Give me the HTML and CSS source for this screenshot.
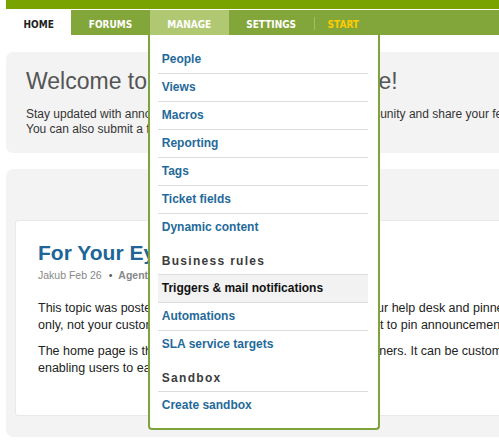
FILE: index.html
```html
<!DOCTYPE html>
<html lang="en">
<head>
<meta charset="utf-8">
<title>Agent Home</title>
<link rel="stylesheet" href="styles.css">
</head>
<body>
<div class="page">
  <div class="topband"></div>
  <ul class="nav">
    <li class="tab tab-home">Home</li>
    <li class="tab">Forums</li>
    <li class="tab tab-active">Manage
      <div class="dropdown">
        <ul class="menu-list">
          <li class="menu-item"><a href="#">People</a></li>
          <li class="menu-item"><a href="#">Views</a></li>
          <li class="menu-item"><a href="#">Macros</a></li>
          <li class="menu-item"><a href="#">Reporting</a></li>
          <li class="menu-item"><a href="#">Tags</a></li>
          <li class="menu-item"><a href="#">Ticket fields</a></li>
          <li class="menu-item"><a href="#">Dynamic content</a></li>
        </ul>
        <h4 class="menu-heading">Business rules</h4>
        <ul class="menu-list">
          <li class="menu-item is-current"><a href="#">Triggers &amp; mail notifications</a></li>
          <li class="menu-item"><a href="#">Automations</a></li>
          <li class="menu-item"><a href="#">SLA service targets</a></li>
        </ul>
        <h4 class="menu-heading">Sandbox</h4>
        <ul class="menu-list">
          <li class="menu-item"><a href="#">Create sandbox</a></li>
        </ul>
      </div>
    </li>
    <li class="tab">Settings</li>
    <li class="divider"></li>
    <li class="tab tab-start">Start</li>
  </ul>

  <div class="content">
    <section class="welcome">
      <h1 class="welcome-title">Welcome to your Agent Home Page!</h1>
      <p class="welcome-text">Stay updated with announcements, interact with the support community and share your feedback with the team. You can also submit a feature request.</p>
    </section>

    <section class="panel">
      <article class="card">
        <h2 class="card-title">For Your Eyes Only</h2>
        <div class="card-meta">Jakub Feb 26<span class="meta-sep">&bull;</span><span class="meta-forum">Agents Only</span></div>
        <p class="card-text">This topic was posted in the Agents Only forums, visible to your help desk and pinned to the top for agents only, not your customers. It's a good way to share news. Use it to pin announcements.</p>
        <p class="card-text card-text-next">The home page is the first page seen by your agents and partners. It can be customized for your needs, enabling users to easily find what they need.</p>
      </article>
    </section>
  </div>
</div>
</body>
</html>
```

FILE: styles.css
```css
html, body {
  margin: 0;
  padding: 0;
  overflow: hidden;
  background: #fff;
}

body {
  font-family: "Liberation Sans", Arial, sans-serif;
  color: #222;
}

.page {
  width: 668px;
  margin-left: 6px;
}

.topband {
  height: 9px;
  margin-bottom: 1px;
  background: #79a300;
}

.nav {
  display: flex;
  list-style: none;
  margin: 0;
  padding: 0;
  height: 25px;
  background: #83a63b;
  font-family: "DejaVu Sans Condensed", "DejaVu Sans", sans-serif;
  font-stretch: condensed;
  font-weight: bold;
  font-size: 10px;
  text-transform: uppercase;
}

.tab {
  position: relative;
  padding: 4px 17.5px 0;
  line-height: 21px;
  color: #fff;
}

.tab-home {
  background: #fff;
  color: #222;
}

.tab-active {
  background: #b1c872;
}

.tab-start {
  color: #ffcc00;
  padding-left: 13px;
}

.divider {
  width: 1px;
  height: 13px;
  margin-top: 7px;
  background: #a2be68;
}

.dropdown {
  position: absolute;
  top: 25px;
  left: -2px;
  z-index: 10;
  width: 210px;
  padding: 11px 10px 9px 8px;
  background: #fff;
  border: 2px solid #7ea33a;
  border-top: 0;
  border-radius: 0 0 4px 4px;
  font-family: "Liberation Sans", Arial, sans-serif;
  font-stretch: normal;
  font-size: 12px;
  line-height: normal;
  text-transform: none;
}

.menu-list {
  list-style: none;
  margin: 0;
  padding: 0;
}

.menu-item a {
  display: block;
  padding-left: 4px;
  line-height: 27px;
  border-bottom: 1px solid #dcdcdc;
  color: #1f6a9a;
  font-weight: bold;
  text-decoration: none;
  white-space: nowrap;
}

.menu-item:last-child a {
  border-bottom: 0;
}

.menu-item.is-current a {
  background: #f2f2f2;
  color: #111;
}

.menu-heading {
  margin: 0;
  padding: 12px 0 5px 4px;
  font-size: 12px;
  line-height: 16px;
  letter-spacing: 1.3px;
  color: #3c3c3c;
  border-bottom: 1px solid #dcdcdc;
}

.welcome {
  margin-top: 17px;
  padding: 16px 40px 16px 20px;
  background: #f3f3f3;
  border-radius: 7px;
}

.welcome-title {
  margin: 0 0 13px;
  font-size: 23px;
  line-height: 26px;
  font-weight: normal;
  color: #555;
}

.welcome-text {
  margin: 0;
  font-size: 12px;
  line-height: 15px;
  color: #333;
}

.panel {
  margin-top: 16px;
  padding: 51px 9px 21px;
  background: #f3f3f3;
  border-radius: 7px;
}

.card {
  padding: 20px 22px 38px;
  background: #fff;
  border: 1px solid #e9e9e9;
  border-radius: 3px;
}

.card-title {
  margin: 0;
  font-size: 21px;
  line-height: 24px;
  font-weight: bold;
  color: #1d6697;
}

.card-meta {
  margin-top: 3px;
  font-size: 10.5px;
  line-height: 14px;
  color: #888;
}

.meta-sep {
  margin: 0 6px 0 7px;
  color: #555;
}

.meta-forum {
  font-weight: bold;
}

.card-text {
  margin: 18px 0 0;
  font-size: 12.5px;
  line-height: 17px;
  color: #222;
}

.card-text-next {
  margin-top: 9px;
}
```
